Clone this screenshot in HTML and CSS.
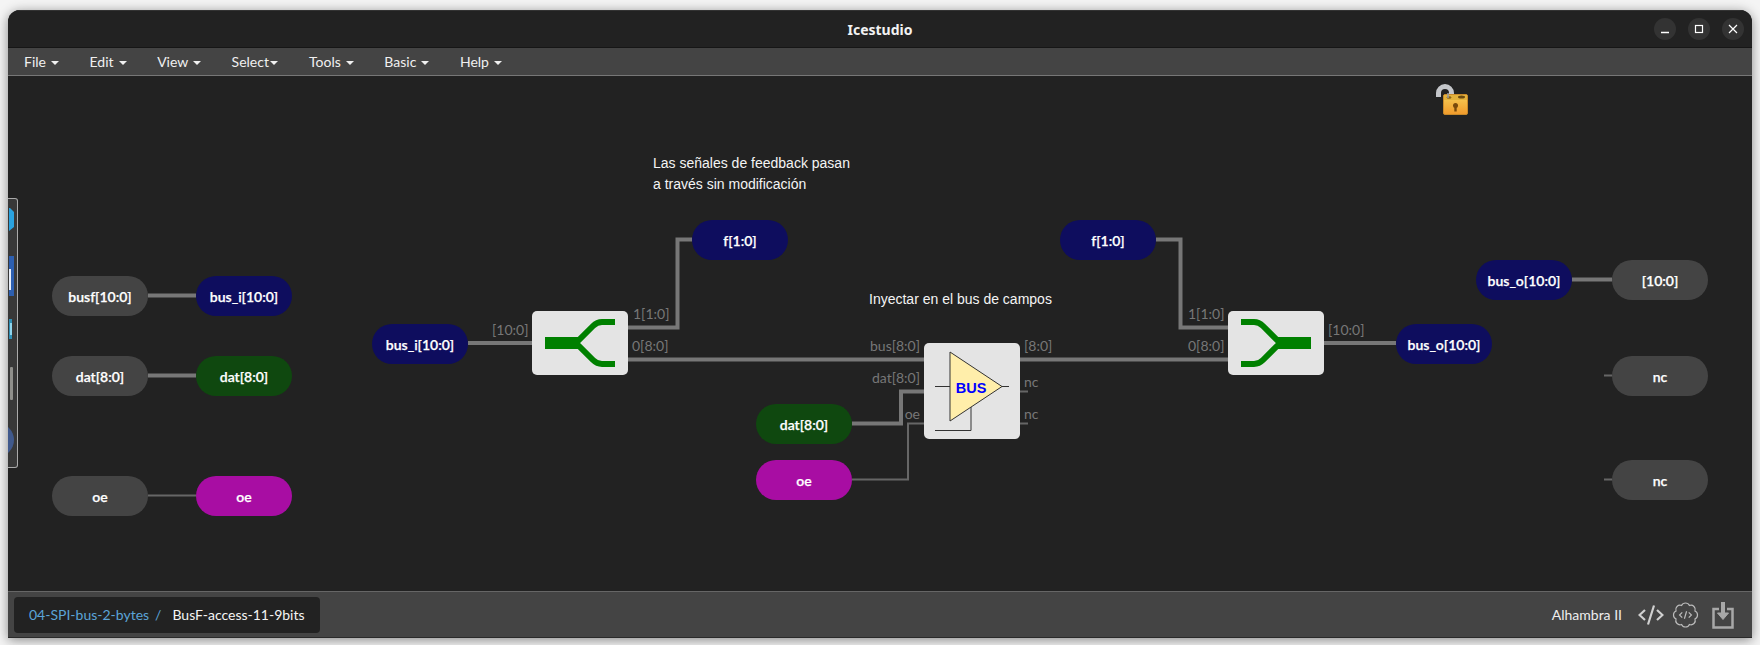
FILE: index.html
```html
<!DOCTYPE html>
<html lang="en">
<head>
    <meta charset="UTF-8">
    <meta name="viewport" content="width=device-width, initial-scale=1.0">
    <title>Icestudio</title>
    <link rel="stylesheet" href="styles.css">
</head>
<body>

    <div class="window">
        <div class="titlebar">
            <span class="title">Icestudio</span>
            <div class="win-buttons">
                <span class="win-btn">
                    <svg width="10" height="10" viewBox="0 0 10 10"><path d="M1 8.5H9" stroke="#fff" stroke-width="1.3"/></svg>
                </span>
                <span class="win-btn">
                    <svg width="10" height="10" viewBox="0 0 10 10"><rect x="1.5" y="1.5" width="7" height="7" fill="none" stroke="#fff" stroke-width="1.2"/></svg>
                </span>
                <span class="win-btn">
                    <svg width="10" height="10" viewBox="0 0 10 10"><path d="M1 1L9 9M9 1L1 9" stroke="#fff" stroke-width="1.2"/></svg>
                </span>
            </div>
        </div>

        <div class="menubar">
            <span class="menu-item">File <i class="caret"></i></span>
            <span class="menu-item">Edit <i class="caret"></i></span>
            <span class="menu-item">View <i class="caret"></i></span>
            <span class="menu-item">Select<i class="caret"></i></span>
            <span class="menu-item">Tools <i class="caret"></i></span>
            <span class="menu-item">Basic <i class="caret"></i></span>
            <span class="menu-item">Help <i class="caret"></i></span>
        </div>

        <div class="canvas">
            <!-- wires, coordinates are relative to the canvas -->
            <svg class="wires" width="1744" height="515" viewBox="8 76 1744 515" fill="none">
                <g stroke="#777" stroke-width="4">
                    <path d="M148 295.500H196"/>
                    <path d="M148 375.500H196"/>
                    <path d="M468 343H532"/>
                    <path d="M628 327.500H677.500V239.500H692"/>
                    <path d="M628 359.500H924"/>
                    <path d="M1020 359.500H1228"/>
                    <path d="M852 423.500H901V391.500H924"/>
                    <path d="M1156 239.500H1180.500V327.500H1228"/>
                    <path d="M1324 343H1396"/>
                    <path d="M1572 279.500H1612"/>
                </g>
                <g stroke="#666" stroke-width="2">
                    <path d="M148 495.500H196"/>
                    <path d="M852 479.500H908V423.500H924"/>
                    <path d="M1020 391.500H1028"/>
                    <path d="M1020 423.500H1028"/>
                    <path d="M1604 375.500H1612"/>
                    <path d="M1604 479.500H1612"/>
                </g>
            </svg>

            <div class="dock">
                <svg width="10" height="270" viewBox="0 0 10 270">
                    <path d="M1 10H2L6 14V29L1 33Z" fill="#2aa3e0"/>
                    <rect x="1" y="58" width="5" height="40" fill="#2d5fb0"/>
                    <rect x="1" y="71" width="2" height="21" fill="#e8eef8"/>
                    <rect x="1" y="121" width="3" height="20" fill="#2f8fb5"/>
                    <rect x="2" y="125" width="2" height="12" fill="#8fd6ee"/>
                    <rect x="2" y="169" width="3" height="33" rx="1" fill="#8f8f8b"/>
                    <circle cx="-11" cy="242" r="17" fill="#40598c"/>
                </svg>
            </div>

            <div class="lock">
                <svg width="34" height="32" viewBox="0 0 34 32">
                    <defs>
                        <linearGradient id="lockBody" x1="0" y1="0" x2="0" y2="1">
                            <stop offset="0" stop-color="#f7cf57"/>
                            <stop offset="1" stop-color="#f19a2b"/>
                        </linearGradient>
                    </defs>
                    <path d="M3.500 13V9A6.500 6.500 0 0 1 16.500 9V14" fill="none" stroke="#c4c6ca" stroke-width="5"/>
                    <rect x="8.500" y="10.500" width="24" height="20" rx="1.500" fill="url(#lockBody)" stroke="#c98a2a"/>
                    <rect x="9" y="11" width="23" height="5" fill="#e3b23c"/>
                    <ellipse cx="26.500" cy="13" rx="3.500" ry="1.500" fill="#6b4a10"/>
                    <ellipse cx="14" cy="13.500" rx="2.500" ry="1.200" fill="#8a6415"/>
                    <circle cx="20.500" cy="21.500" r="2.500" fill="#7a4a0c"/>
                    <rect x="19.300" y="22" width="2.400" height="5.500" fill="#7a4a0c"/>
                    <path d="M13 9V14" stroke="#9a9da2" stroke-width="1.500"/>
                </svg>
            </div>

            <p class="note note-feedback">Las señales de feedback pasan<br>a través sin modificación</p>
            <p class="note note-inject">Inyectar en el bus de campos</p>

            <div class="pill gray n-busf">busf[10:0]</div>
            <div class="pill navy n-bus-i-left">bus_i[10:0]</div>
            <div class="pill gray n-dat-left">dat[8:0]</div>
            <div class="pill green n-dat-left2">dat[8:0]</div>
            <div class="pill gray n-oe-left">oe</div>
            <div class="pill purple n-oe-left2">oe</div>

            <div class="pill navy n-bus-i">bus_i[10:0]</div>
            <div class="pill navy n-f-in">f[1:0]</div>
            <div class="pill green n-dat">dat[8:0]</div>
            <div class="pill purple n-oe">oe</div>
            <div class="pill navy n-f-out">f[1:0]</div>
            <div class="pill navy n-bus-o">bus_o[10:0]</div>

            <div class="pill navy n-bus-o2">bus_o[10:0]</div>
            <div class="pill gray n-out">[10:0]</div>
            <div class="pill gray n-nc1">nc</div>
            <div class="pill gray n-nc2">nc</div>

            <div class="block n-split">
                <svg width="96" height="64" viewBox="0 0 96 64" fill="none" stroke="#008000">
                    <path d="M13 32H46" stroke-width="12"/>
                    <path d="M83 11H70Q65 11 61 15L44 32L61 49Q65 53 70 53H83" stroke-width="6"/>
                </svg>
            </div>

            <div class="block n-join">
                <svg width="96" height="64" viewBox="0 0 96 64" fill="none" stroke="#008000">
                    <path d="M83 32H50" stroke-width="12"/>
                    <path d="M13 11H26Q31 11 35 15L52 32L35 49Q31 53 26 53H13" stroke-width="6"/>
                </svg>
            </div>

            <div class="block n-bus">
                <svg width="96" height="96" viewBox="0 0 96 96" fill="none" stroke="#333">
                    <path d="M11 43.500H26M78 43.500H85M47 64V87.500H11"/>
                    <path d="M26 9L78 43.500L26 78Z" fill="#ffeeaa"/>
                    <text x="47" y="49.500" class="bus-text">BUS</text>
                </svg>
            </div>

            <span class="port p1">[10:0]</span>
            <span class="port p2">1[1:0]</span>
            <span class="port p3">0[8:0]</span>
            <span class="port p4 right">bus[8:0]</span>
            <span class="port p5 right">dat[8:0]</span>
            <span class="port p6 right">oe</span>
            <span class="port p7">[8:0]</span>
            <span class="port p8">nc</span>
            <span class="port p9">nc</span>
            <span class="port p10">1[1:0]</span>
            <span class="port p11">0[8:0]</span>
            <span class="port p12">[10:0]</span>
        </div>

        <div class="footer">
            <div class="breadcrumb">
                <span class="crumb-link">04-SPI-bus-2-bytes</span>
                <span class="crumb-sep">/</span>
                <span class="crumb-current">BusF-access-11-9bits</span>
            </div>
            <div class="footer-right">
                <span class="board">Alhambra II</span>
                <svg class="icon-code" width="26" height="22" viewBox="0 0 26 22" fill="none" stroke="#d0d0d0" stroke-width="2.200">
                    <path d="M7 6L1.500 11L7 16M19 6L24.500 11L19 16M16 1.500L10 20.500"/>
                </svg>
                <svg class="icon-gear" width="27" height="26" viewBox="0 0 25 24" fill="none" stroke="#bcbcbc" stroke-width="1.100">
                    <path d="M21.280 8.360A4 4 0 0 1 21.280 15.640A4 4 0 0 1 16.140 20.780A4 4 0 0 1 8.860 20.780A4 4 0 0 1 3.720 15.640A4 4 0 0 1 3.720 8.360A4 4 0 0 1 8.860 3.220A4 4 0 0 1 16.140 3.220A4 4 0 0 1 21.280 8.360Z"/>
                    <path d="M9.500 9.500L7 12L9.500 14.500M15.500 9.500L18 12L15.500 14.500M13.500 8.500L11.500 15.500"/>
                </svg>
                <svg class="icon-save" width="22" height="28" viewBox="0 0 22 28" fill="none" stroke="#a8a8a8">
                    <path d="M7 8H1.500V26.500H20.500V8H15" stroke-width="2.500"/>
                    <path d="M11 1V14" stroke-width="4"/>
                    <path d="M5.500 12L11 18.500L16.500 12Z" fill="#a8a8a8" stroke-width="1"/>
                </svg>
            </div>
        </div>
    </div>

</body>
</html>
```

FILE: styles.css
```css
body {
    margin: 0;
    background: #f4f4f4;
    font-family: Lato, "Open Sans", sans-serif;
    color: white;
    overflow: hidden;
}
.window {
    display: flex;
    flex-direction: column;
    height: 628px;
    margin: 10px 8px 7px;
    background: #222;
    border-radius: 12px 12px 0 0;
    box-shadow: 0 2px 12px rgba(0, 0, 0, 0.45);
    overflow: hidden;
}

/* title bar */
.titlebar {
    position: relative;
    display: flex;
    align-items: center;
    justify-content: center;
    height: 38px;
    flex: none;
    box-sizing: border-box;
    background: #222;
    border-top: 1px solid #333;
    border-bottom: 1px solid #161616;
}
.title {
    font-family: "Noto Sans", sans-serif;
    font-size: 14px;
    font-weight: 700;
    color: #f2f2f2;
}
.win-buttons {
    position: absolute;
    right: 8px;
    top: 7px;
    display: flex;
    gap: 12px;
}
.win-btn {
    display: flex;
    align-items: center;
    justify-content: center;
    width: 22px;
    height: 22px;
    border-radius: 50%;
    background: #333;
}

/* menu bar */
.menubar {
    display: flex;
    align-items: center;
    gap: 30.500px;
    height: 28px;
    flex: none;
    box-sizing: border-box;
    padding-left: 16px;
    background: #444;
    border-bottom: 1px solid #777;
    font-size: 14px;
    color: #f0f0f0;
}
.menu-item {
    white-space: nowrap;
}
.caret {
    display: inline-block;
    width: 0;
    height: 0;
    margin-left: 1.500px;
    vertical-align: middle;
    border-top: 4px solid #f0f0f0;
    border-left: 4px solid transparent;
    border-right: 4px solid transparent;
}

/* diagram */
.canvas {
    position: relative;
    flex: 1;
    background: #222;
    overflow: hidden;
}
.wires {
    position: absolute;
    left: 0;
    top: 0;
}
.dock {
    position: absolute;
    left: 0;
    top: 122px;
    width: 10px;
    height: 270px;
    box-sizing: border-box;
    background: #383838;
    border: 1px solid #aaa;
    border-left: none;
    border-radius: 0 3px 3px 0;
    overflow: hidden;
}
.dock svg {
    display: block;
    margin-top: -1px;
}
.lock {
    position: absolute;
    left: 1427px;
    top: 8px;
}
.note {
    position: absolute;
    margin: 0;
    font-family: "Liberation Sans", Arial, sans-serif;
    font-size: 14px;
    line-height: 21px;
    color: #f4f4f4;
    white-space: nowrap;
}
.note-feedback { left: 645px; top: 77px; }
.note-inject { left: 861px; top: 213px; }

.pill {
    position: absolute;
    display: flex;
    align-items: center;
    justify-content: center;
    width: 96px;
    height: 40px;
    border-radius: 20px;
    font-size: 14px;
    font-weight: 600;
    color: #fff;
    -webkit-text-stroke: 0.250px #fff;
}
.gray { background: #444; }
.navy { background: #0e0d5e; }
.green { background: #0f480f; }
.purple { background: #a80da3; }

.n-busf { left: 44px; top: 200px; }
.n-bus-i-left { left: 188px; top: 200px; }
.n-dat-left { left: 44px; top: 280px; }
.n-dat-left2 { left: 188px; top: 280px; }
.n-oe-left { left: 44px; top: 400px; }
.n-oe-left2 { left: 188px; top: 400px; }
.n-bus-i { left: 364px; top: 248px; }
.n-f-in { left: 684px; top: 144px; }
.n-dat { left: 748px; top: 328px; }
.n-oe { left: 748px; top: 384px; }
.n-f-out { left: 1052px; top: 144px; }
.n-bus-o { left: 1388px; top: 248px; }
.n-bus-o2 { left: 1468px; top: 184px; }
.n-out { left: 1604px; top: 184px; }
.n-nc1 { left: 1604px; top: 280px; }
.n-nc2 { left: 1604px; top: 384px; }

.block {
    position: absolute;
    width: 96px;
    background: #e4e4e4;
    border-radius: 5px;
}
.block svg {
    display: block;
}
.n-split { left: 524px; top: 235px; height: 64px; }
.n-join { left: 1220px; top: 235px; height: 64px; }
.n-bus { left: 916px; top: 267px; height: 96px; }
.bus-text {
    font-family: "Liberation Sans", Arial, sans-serif;
    font-size: 14.500px;
    font-weight: 700;
    fill: #0000ff;
    stroke: none;
    text-anchor: middle;
}

.port {
    position: absolute;
    font-size: 14px;
    line-height: 16px;
    color: #777;
    white-space: nowrap;
}
.port.right {
    text-align: right;
    width: 80px;
}
.p1 { left: 484px; top: 246px; }
.p2 { left: 625px; top: 230px; }
.p3 { left: 624px; top: 262px; }
.p4 { left: 832px; top: 262px; }
.p5 { left: 832px; top: 294px; }
.p6 { left: 832px; top: 330px; }
.p7 { left: 1016px; top: 262px; }
.p8 { left: 1016px; top: 298px; }
.p9 { left: 1016px; top: 330px; }
.p10 { left: 1180px; top: 230px; }
.p11 { left: 1180px; top: 262px; }
.p12 { left: 1320px; top: 246px; }

/* footer */
.footer {
    display: flex;
    align-items: center;
    justify-content: space-between;
    height: 47px;
    flex: none;
    box-sizing: border-box;
    padding: 0 18px 0 6px;
    background: #444;
    border-top: 1px solid #666;
    border-bottom: 1px solid #2a2a2a;
}
.breadcrumb {
    display: flex;
    align-items: center;
    width: 306px;
    height: 36px;
    box-sizing: border-box;
    padding-left: 15px;
    background: #222;
    border-radius: 4px;
    font-size: 14px;
    white-space: nowrap;
}
.crumb-link { color: #5ba4d8; }
.crumb-sep { color: #5ba4d8; margin-left: 6px; }
.crumb-current { color: #f4f4f4; margin-left: 11px; }
.footer-right {
    display: flex;
    align-items: center;
}
.board {
    font-size: 14px;
    color: #eee;
    margin-right: 16px;
}
.icon-code { margin-right: 8px; }
.icon-gear { margin-right: 13px; }
```
